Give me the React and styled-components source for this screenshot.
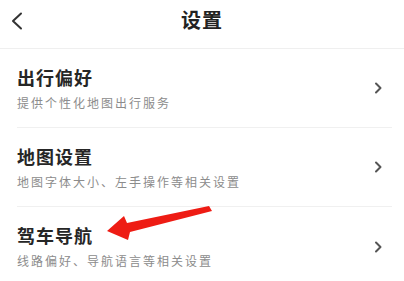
import React from "react";
import styled, { createGlobalStyle } from "styled-components";

const GlobalStyle = createGlobalStyle`
  body {
    margin: 0;
    background: #fff;
    font-family: "Noto Sans CJK SC", "Noto Sans", sans-serif;
  }
`;

const Page = styled.div`
  position: relative;
  width: 404px;
  height: 281px;
  overflow: hidden;
  background: #fff;
`;

const Header = styled.div`
  position: relative;
  height: 49px;
  display: flex;
  align-items: center;
  justify-content: center;
  padding-bottom: 8px;
  box-sizing: border-box;
  border-bottom: 1px solid #efefef;
`;

const BackButton = styled.div`
  position: absolute;
  left: 10px;
  top: 12px;
  width: 14px;
  height: 18px;
  display: flex;
`;

const Title = styled.h1`
  margin: 0;
  font-size: 20px;
  font-weight: 700;
  letter-spacing: 1px;
  color: #222;
  line-height: 24px;
`;

const List = styled.div`
  display: flex;
  flex-direction: column;
`;

const Row = styled.div`
  height: 79px;
  display: flex;
  align-items: center;
  justify-content: space-between;
  margin-left: 17px;
  margin-right: 12px;
  border-bottom: ${(props) => (props.last ? "none" : "1px solid #f0f0f0")};
  box-sizing: border-box;
`;

const Texts = styled.div`
  display: flex;
  flex-direction: column;
`;

const RowTitle = styled.div`
  font-size: 18px;
  font-weight: 700;
  letter-spacing: 1px;
  line-height: 22px;
  color: #262626;
`;

const RowSub = styled.div`
  margin-top: 7px;
  font-size: 12px;
  letter-spacing: 2px;
  line-height: 16px;
  color: #8c8c8c;
`;

const Chevron = styled.div`
  width: 8px;
  height: 12px;
  margin-right: 10px;
  display: flex;
`;

const Arrow = styled.svg`
  position: absolute;
  left: 0;
  top: 0;
  pointer-events: none;
`;

const items = [
  { title: "出行偏好", sub: "提供个性化地图出行服务" },
  { title: "地图设置", sub: "地图字体大小、左手操作等相关设置" },
  { title: "驾车导航", sub: "线路偏好、导航语言等相关设置" },
];

const App = () => (
  <Page>
    <GlobalStyle />
    <Header>
      <BackButton>
        <svg width="14" height="18" viewBox="0 0 14 18">
          <polyline
            points="11,1.5 3,9 11,16.5"
            fill="none"
            stroke="#333"
            strokeWidth="2"
            strokeLinecap="round"
            strokeLinejoin="round"
          />
        </svg>
      </BackButton>
      <Title>设置</Title>
    </Header>
    <List>
      {items.map((item, i) => (
        <Row key={item.title} last={i === items.length - 1}>
          <Texts>
            <RowTitle>{item.title}</RowTitle>
            <RowSub>{item.sub}</RowSub>
          </Texts>
          <Chevron>
            <svg width="8" height="12" viewBox="0 0 8 12">
              <polyline
                points="2,1.5 6.5,6 2,10.5"
                fill="none"
                stroke="#555"
                strokeWidth="2"
                strokeLinecap="round"
                strokeLinejoin="round"
              />
            </svg>
          </Chevron>
        </Row>
      ))}
    </List>
    <Arrow width="404" height="281" viewBox="0 0 404 281">
      <polygon
        points="107,231 124,216 127,223 209,206 212,211 130,232 128,240"
        fill="#ee1c14"
      />
    </Arrow>
  </Page>
);

export default App;
